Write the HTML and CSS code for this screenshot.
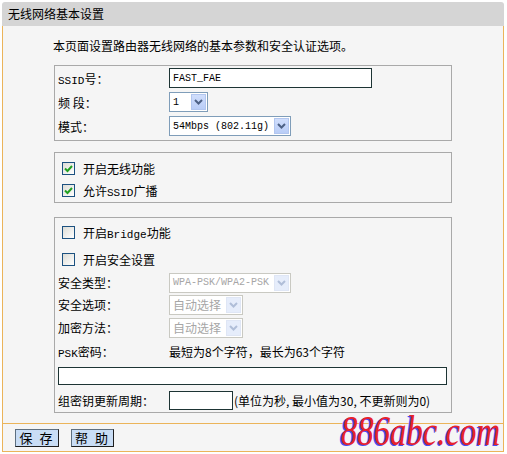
FILE: index.html
```html
<!DOCTYPE html>
<html lang="zh-CN">

<head>
    <meta charset="UTF-8">
    <title>无线网络基本设置</title>
    <link rel="stylesheet" href="styles.css">
</head>

<body>
    <div class="panel">
        <div class="title">无线网络基本设置</div>

        <div class="content">
            <p class="intro">本页面设置路由器无线网络的基本参数和安全认证选项。</p>

            <!-- basic params -->
            <div class="group g1">
                <div class="row h24">
                    <span class="label"><span class="en">SSID</span>号：</span>
                    <input class="text ssid" type="text" value="FAST_FAE">
                </div>
                <div class="row h24">
                    <span class="label">频&nbsp;段：</span>
                    <span class="sel w39"><span class="val mono">1</span><span class="arr"><svg width="9" height="6" viewBox="0 0 9 6"><polyline points="1,1 4.5,4.5 8,1" /></svg></span></span>
                </div>
                <div class="row h24">
                    <span class="label">模式：</span>
                    <span class="sel w122"><span class="val mono">54Mbps (802.11g)</span><span class="arr"><svg width="9" height="6" viewBox="0 0 9 6"><polyline points="1,1 4.5,4.5 8,1" /></svg></span></span>
                </div>
            </div>

            <!-- switches -->
            <div class="group g2">
                <div class="row h22 check">
                    <span class="cb"><svg width="11" height="11" viewBox="0 0 11 11"><polyline points="2,5.5 4.5,8 9,3" /></svg></span>
                    <span>开启无线功能</span>
                </div>
                <div class="row h22 check">
                    <span class="cb"><svg width="11" height="11" viewBox="0 0 11 11"><polyline points="2,5.5 4.5,8 9,3" /></svg></span>
                    <span>允许<span class="en">SSID</span>广播</span>
                </div>
            </div>

            <!-- security -->
            <div class="group g3">
                <div class="row h28 check">
                    <span class="cb"></span>
                    <span>开启<span class="en">Bridge</span>功能</span>
                </div>
                <div class="row h26 check">
                    <span class="cb"></span>
                    <span>开启安全设置</span>
                </div>
                <div class="row h21">
                    <span class="label">安全类型：</span>
                    <span class="sel dis w122"><span class="val mono">WPA-PSK/WPA2-PSK</span><span class="arr"><svg width="9" height="6" viewBox="0 0 9 6"><polyline points="1,1 4.5,4.5 8,1" /></svg></span></span>
                </div>
                <div class="row h23">
                    <span class="label">安全选项：</span>
                    <span class="sel dis w74"><span class="val">自动选择</span><span class="arr"><svg width="9" height="6" viewBox="0 0 9 6"><polyline points="1,1 4.5,4.5 8,1" /></svg></span></span>
                </div>
                <div class="row h23">
                    <span class="label">加密方法：</span>
                    <span class="sel dis w74"><span class="val">自动选择</span><span class="arr"><svg width="9" height="6" viewBox="0 0 9 6"><polyline points="1,1 4.5,4.5 8,1" /></svg></span></span>
                </div>
                <div class="row h25">
                    <span class="label"><span class="en">PSK</span>密码：</span>
                    <span>最短为8个字符，最长为63个字符</span>
                </div>
                <div class="row h24">
                    <input class="text psk" type="text" value="">
                </div>
                <div class="row h24">
                    <span class="label">组密钥更新周期：</span>
                    <input class="text period" type="text" value="">
                    <span class="tip">(单位为秒, 最小值为30, 不更新则为0)</span>
                </div>
            </div>
        </div>

        <div class="footer">
            <button class="btn save">保 存</button>
            <button class="btn help">帮 助</button>
        </div>

        <div class="watermark">886abc.com</div>
    </div>
</body>

</html>
```

FILE: styles.css
```css
body {
    margin: 0;
    background-color: #fff;
    font-family: "Noto Sans CJK SC", sans-serif;
    font-size: 12px;
    color: #000;
}

.panel {
    position: relative;
    width: 502px;
    margin: 2px 0 0 2px;
}

.title {
    height: 24px;
    line-height: 24px;
    padding-left: 6px;
    background-color: #d5d5d5;
    border-radius: 3px 3px 0 0;
}

.content {
    background-color: #f5f5f5;
    border-left: 1px solid #ebb45a;
    border-right: 1px solid #ebb45a;
    border-bottom: 1px solid #ebb45a;
    padding: 0 0 10px 51px;
}

.intro {
    margin: 0 0 0 -1px;
    height: 39px;
    line-height: 39px;
}

.en {
    font-family: "Liberation Mono", monospace;
    font-size: 11px;
}

.mono {
    font-family: "Liberation Mono", monospace;
    font-size: 10px;
}

.group {
    box-sizing: border-box;
    width: 398px;
    border: 1px solid #a9a9a9;
    padding-left: 3px;
}

.g1 {
    padding-bottom: 2px;
    margin-bottom: 11px;
}

.g2 {
    padding-top: 4px;
    padding-bottom: 1px;
    margin-bottom: 14px;
}

.row {
    display: flex;
    align-items: center;
}

.h21 { height: 21px; }
.h22 { height: 22px; }
.h23 { height: 23px; }
.h24 { height: 24px; }
.h25 { height: 25px; }
.h26 { height: 26px; }
.h28 { height: 28px; }

.label {
    width: 111px;
    flex-shrink: 0;
}

.check {
    padding-left: 4px;
    gap: 8px;
}

.cb {
    box-sizing: border-box;
    width: 13px;
    height: 13px;
    border: 1px solid #1c5180;
    background: linear-gradient(135deg, #dcdcd6, #fff);
    display: flex;
    align-items: center;
    justify-content: center;
}

.cb svg polyline {
    fill: none;
    stroke: #21a121;
    stroke-width: 2;
}

.text {
    box-sizing: border-box;
    border: 1px solid #1d3434;
    background-color: #fff;
    margin: 0;
    padding: 0 3px;
    font-family: "Liberation Mono", monospace;
    font-size: 10px;
    outline: none;
}

.ssid {
    width: 203px;
    height: 20px;
}

.psk {
    width: 389px;
    height: 18px;
}

.period {
    width: 64px;
    height: 19px;
}

.tip {
    margin-left: 1px;
}

.sel {
    box-sizing: border-box;
    display: inline-flex;
    align-items: center;
    height: 20px;
    border: 1px solid #7f9db9;
    background-color: #fff;
}

.sel .val {
    flex: 1;
    padding-left: 3px;
    white-space: nowrap;
}

.sel .arr {
    box-sizing: border-box;
    width: 15px;
    height: 16px;
    margin-right: 1px;
    background: linear-gradient(#d0defc, #b9cdf7);
    border: 1px solid #b2c6ef;
    display: flex;
    align-items: center;
    justify-content: center;
}

.sel .arr polyline {
    fill: none;
    stroke: #4d6185;
    stroke-width: 2;
}

.w39 { width: 39px; }
.w74 { width: 74px; }
.w122 { width: 122px; }

.sel.dis {
    border-color: #c9c9c2;
    color: #a6a6a6;
}

.sel.dis .arr {
    background: #e6edfb;
    border-color: #dfe6f5;
}

.sel.dis .arr polyline {
    stroke: #b0bed8;
}

.footer {
    height: 27px;
    border-left: 1px solid #ebb45a;
    border-right: 1px solid #ebb45a;
    border-bottom: 1px solid #ebb45a;
    background-color: #f5f5f5;
    display: flex;
    align-items: center;
    gap: 12px;
    padding-left: 12px;
}

.btn {
    height: 18px;
    padding: 0;
    margin: 0;
    background-color: #c9ddf5;
    border: 1px solid;
    border-color: #5d6f80 #1e1e1e #1e1e1e #5d6f80;
    font-family: "Noto Sans CJK SC", sans-serif;
    font-size: 13px;
    line-height: 16px;
    letter-spacing: 2px;
    white-space: pre;
    color: #000;
}

.save { width: 44px; }
.help { width: 43px; }

.watermark {
    position: absolute;
    right: 4px;
    bottom: 1px;
    font-family: "Liberation Serif", serif;
    font-style: italic;
    font-size: 42px;
    line-height: 40px;
    color: #e8222c;
    text-shadow: -2px 1px 0 #4a4af0;
    transform: scaleX(0.78);
    transform-origin: right bottom;
    pointer-events: none;
}
```
